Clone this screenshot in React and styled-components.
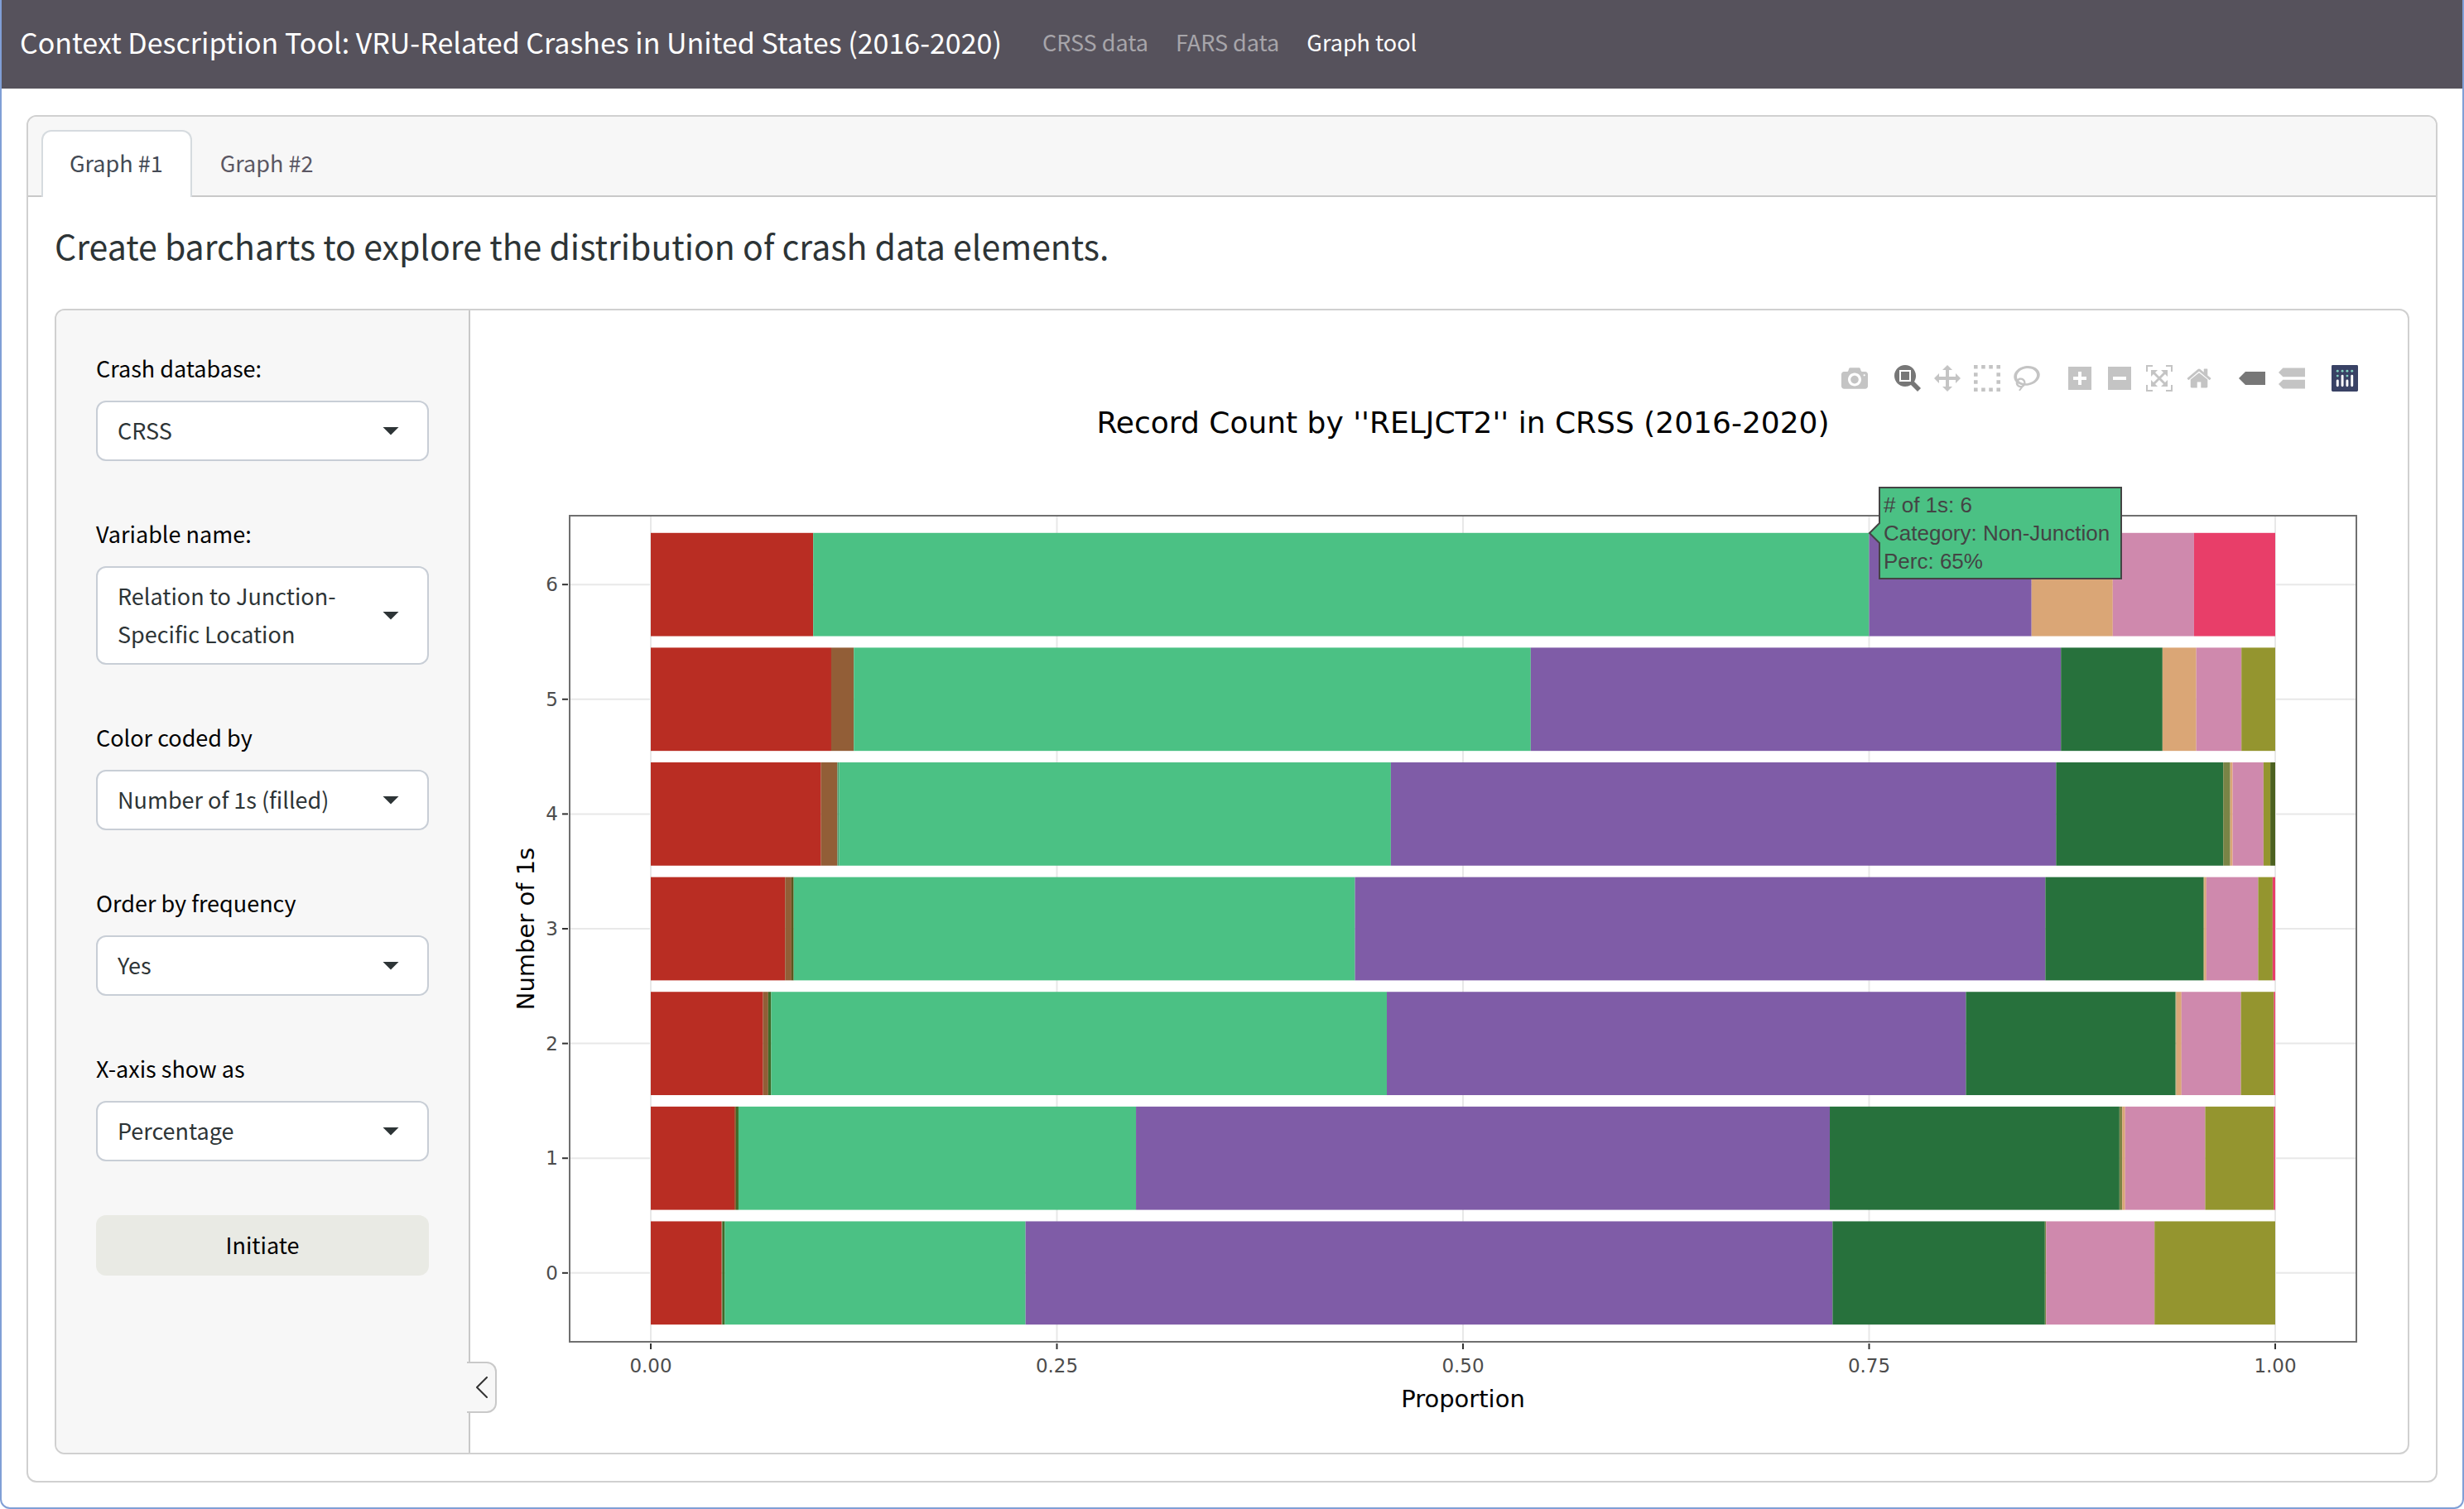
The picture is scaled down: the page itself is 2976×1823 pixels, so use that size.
import React, { useState } from "react";
import styled, { createGlobalStyle } from "styled-components";

const sans = '"Noto Sans CJK SC", "Noto Sans", sans-serif';
const chartSans = '"DejaVu Sans", Verdana, sans-serif';
const line = "#d0d0d0";
const panel = "#f7f7f7";

const GlobalStyle = createGlobalStyle`
  *, *::before, *::after { box-sizing: border-box; }
  body { margin: 0; background: #fff; font-family: ${sans}; }
  button, select { font: inherit; }
`;

const Page = styled.div`
  min-height: 100vh;
  border: 2px solid #809fd6;
  border-top: 0;
  border-radius: 0 0 12px 12px;
  background: #fff;
  color: #2d3436;
  font-size: 27px;
  line-height: 46px;
`;

const Header = styled.header`
  display: flex;
  align-items: center;
  gap: 49px;
  padding: 17px 22px 22px;
  background: #56525c;
`;

const Brand = styled.a`
  color: #fff;
  font-size: 34px;
  line-height: 68px;
  text-decoration: none;
`;

const Nav = styled.nav`
  display: flex;
  gap: 33px;
`;

const NavLink = styled.a`
  color: ${(p) => (p.$active ? "#fff" : "#a7a5aa")};
  text-decoration: none;
`;

const Main = styled.main`
  padding: 32px 30px 30px;
`;

const Card = styled.section`
  border: 2px solid ${line};
  border-radius: 12px;
`;

const TabBar = styled.div`
  display: flex;
  padding: 16px 16px 0;
  background: ${panel};
  border-bottom: 2px solid #c9c9c9;
  border-radius: 10px 10px 0 0;
`;

const Tab = styled.button`
  margin-bottom: -2px;
  padding: 15px 33px 18px 32px;
  line-height: 46px;
  border: 2px solid ${(p) => (p.$active ? "#d6dbdf" : "transparent")};
  border-bottom: 0;
  border-radius: 12px 12px 0 0;
  background: ${(p) => (p.$active ? "#fff" : "transparent")};
  color: ${(p) => (p.$active ? "#434a54" : "#5b5763")};
`;

const CardBody = styled.div`
  padding: 32px;
`;

const Heading = styled.h1`
  margin: 0 0 50px;
  font-size: 41px;
  font-weight: 400;
  line-height: 53px;
`;

const Split = styled.div`
  display: grid;
  grid-template-columns: 500px minmax(0, 1fr);
  border: 2px solid ${line};
  border-radius: 12px;
`;

const Sidebar = styled.form`
  position: relative;
  display: flex;
  flex-direction: column;
  gap: 65px;
  padding: 47px 48px;
  background: ${panel};
  border-right: 2px solid #c9c9c9;
  border-radius: 10px 0 0 10px;
`;

const Field = styled.div`
  display: flex;
  flex-direction: column;
  gap: 16px;
`;

const Label = styled.label`
  color: #000;
`;

const SelectBox = styled.div`
  display: grid;
  align-items: center;

  &::after {
    content: "";
    grid-area: 1 / 1;
    justify-self: end;
    width: 20px;
    height: 10px;
    margin-right: 36px;
    background: #2d3436;
    clip-path: polygon(0 0, 100% 0, 50% 100%);
    pointer-events: none;
  }
`;

const Select = styled.select`
  grid-area: 1 / 1;
  appearance: none;
  width: 100%;
  height: auto;
  padding: 11px 80px 12px 24px;
  border: 2px solid #c8ced6;
  border-radius: 12px;
  background: #fff;
  color: #2d3436;
  line-height: 46px;
  white-space: normal;
`;

const Submit = styled.button`
  padding: 13px 24px 14px;
  border: 0;
  border-radius: 12px;
  background: #e9eae4;
  color: #000;
  line-height: 46px;
`;

const Collapse = styled.button`
  position: absolute;
  left: calc(100% - 2px);
  bottom: 48px;
  display: flex;
  align-items: center;
  width: 36px;
  height: 62px;
  padding: 0 0 0 11px;
  border: 2px solid #c9c9c9;
  border-left: 0;
  border-radius: 0 12px 12px 0;
  background: ${panel};
`;

const Plot = styled.figure`
  margin: 0;
  padding-top: 66px;
  min-width: 0;
`;

const ModeBar = styled.div`
  display: flex;
  justify-content: flex-end;
  gap: 32px;
  padding-right: 60px;
`;

const ModeGroup = styled.div`
  display: flex;
  gap: 16px;
`;

const ModeButton = styled.button`
  display: flex;
  padding: 0;
  border: 0;
  background: none;
  color: ${(p) => (p.$active ? "#777" : "#c4c4c4")};

  svg { width: 32px; height: 32px; }
`;

const Chart = styled.svg`
  display: block;
  width: 100%;
  height: auto;
  font-family: ${chartSans};
`;

const TickText = styled.text`
  font-size: 23px;
  fill: #4d4d4d;
`;

const AxisTitle = styled.text`
  font-size: 29px;
  text-anchor: middle;
`;

const ChartTitle = styled.text`
  font-size: 36px;
  text-anchor: middle;
`;

const HoverText = styled.text`
  font-family: "Liberation Sans", Arial, sans-serif;
  font-size: 26px;
  fill: #444;
`;

const fields = [
  { id: "database", label: "Crash database:", options: ["CRSS", "FARS"] },
  { id: "variable", label: "Variable name:", options: ["Relation to Junction-Specific Location"] },
  { id: "color", label: "Color coded by", options: ["Number of 1s (filled)"] },
  { id: "order", label: "Order by frequency", options: ["Yes", "No"] },
  { id: "xaxis", label: "X-axis show as", options: ["Percentage", "Count"] },
];

const modeGroups = [
  [
    { name: "Download plot as a png", w: 1000, d: "m500 450c-83 0-150-67-150-150 0-83 67-150 150-150 83 0 150 67 150 150 0 83-67 150-150 150z m400 150h-120c-16 0-34 13-39 29l-31 93c-6 15-23 28-40 28h-340c-16 0-34-13-39-28l-31-94c-6-15-23-28-40-28h-120c-55 0-100-45-100-100v-450c0-55 45-100 100-100h800c55 0 100 45 100 100v450c0 55-45 100-100 100z m-400-550c-138 0-250 112-250 250 0 138 112 250 250 250 138 0 250-112 250-250 0-138-112-250-250-250z m365 380c-19 0-35 16-35 35 0 19 16 35 35 35 19 0 35-16 35-35 0-19-16-35-35-35z" },
  ],
  [
    { name: "Zoom", active: true, w: 1000, d: "m1000-25l-250 251c40 63 63 138 63 218 0 224-182 406-407 406-224 0-406-182-406-406s183-406 407-406c80 0 155 22 218 62l250-250 125 125z m-812 250l0 438 437 0 0-438-437 0z m62 375l313 0 0-312-313 0 0 312z" },
    { name: "Pan", w: 1000, d: "m1000 350l-187 188 0-125-250 0 0 250 125 0-188 187-187-187 125 0 0-250-250 0 0 125-188-188 186-187 0 125 252 0 0-250-125 0 187-188 188 188-125 0 0 250 250 0 0-126 187 188z" },
    { name: "Box select", w: 1000, d: "m0 850l0-143 143 0 0 143-143 0z m286 0l0-143 143 0 0 143-143 0z m285 0l0-143 143 0 0 143-143 0z m286 0l0-143 143 0 0 143-143 0z m-857-286l0-143 143 0 0 143-143 0z m857 0l0-143 143 0 0 143-143 0z m-857-285l0-143 143 0 0 143-143 0z m857 0l0-143 143 0 0 143-143 0z m-857-286l0-143 143 0 0 143-143 0z m286 0l0-143 143 0 0 143-143 0z m285 0l0-143 143 0 0 143-143 0z m286 0l0-143 143 0 0 143-143 0z" },
    { name: "Lasso select", w: 1031, d: "m1018 538c-36 207-290 336-568 286-277-48-473-256-436-463 10-57 36-108 76-151-13-66 11-137 68-183 34-28 75-41 114-42l-55-70 0 0c-2-1-3-2-4-3-10-14-8-34 5-45 14-11 34-8 45 4 1 1 2 3 2 5l0 0 113 140c16 11 31 24 45 40 4 3 6 7 8 11 48-3 100 0 151 9 278 48 473 255 436 462z m-624-379c-80 14-149 48-197 96 42 42 109 47 156 9 33-26 47-66 41-105z m-187-74c-19 16-33 37-39 60 50-32 109-55 174-68-42-25-95-24-135 8z m360 75c-34-7-69-9-102-8 8 62-16 128-68 170-73 59-175 54-244-5-9 20-16 40-20 61-28 159 121 317 333 354s407-60 434-217c28-159-121-318-333-355z" },
  ],
  [
    { name: "Zoom in", w: 875, d: "m1 787l0-875 875 0 0 875-875 0z m687-500l-187 0 0-187-125 0 0 187-188 0 0 125 188 0 0 187 125 0 0-187 187 0 0-125z" },
    { name: "Zoom out", w: 875, d: "m0 788l0-876 875 0 0 876-875 0z m688-500l-500 0 0 125 500 0 0-125z" },
    { name: "Autoscale", w: 1000, d: "m250 850l-187 0-63 0 0-62 0-188 63 0 0 188 187 0 0 62z m688 0l-188 0 0-62 188 0 0-188 62 0 0 188 0 62-62 0z m-875-938l0 188-63 0 0-188 0-62 63 0 187 0 0 62-187 0z m875 188l0-188-188 0 0-62 188 0 62 0 0 62 0 188-62 0z m-125 188l-1 0-93-94-156 156 156 156 92-93 2 0 0 250-250 0 0-2 93-92-156-156-156 156 94 92 0 2-250 0 0-250 0 0 93 93 157-156-157-156-93 94 0 0 0-250 250 0 0 0-94 93 156 157 156-157-93-93 0 0 250 0 0 250z" },
    { name: "Reset axes", w: 928, d: "m786 296v-267q0-15-11-26t-25-10h-214v214h-143v-214h-214q-15 0-25 10t-11 26v267q0 1 0 2t0 2l321 264 321-264q1-1 1-4z m124 39l-34-41q-5-5-12-6h-2q-7 0-12 3l-386 322-386-322q-7-4-13-4-7 2-12 7l-35 41q-4 5-3 13t6 12l401 334q18 15 42 15t43-15l136-114v109q0 8 5 13t13 5h107q8 0 13-5t5-13v-227l122-102q5-5 6-12t-4-13z" },
  ],
  [
    { name: "Show closest data on hover", active: true, w: 1500, d: "m375 725l0 0-375-375 375-374 0-1 1125 0 0 750-1125 0z" },
    { name: "Compare data on hover", w: 1125, d: "m187 786l0 2-187-188 188-187 0 0 937 0 0 373-938 0z m0-499l0 1-187-188 188-188 0 0 937 0 0 376-938-1z" },
  ],
];

const red = "#b92d23";
const brown = "#925e37";
const green = "#4bc184";
const purple = "#7f5ca7";
const forest = "#27713c";
const tan = "#daa676";
const pink = "#cf89ad";
const olive = "#94952f";
const crimson = "#e83e69";
const moss = "#7a8446";
const dark = "#3f6a28";

// Each segment is [cumulative end, colour].
const rows = [
  { value: 6, parts: [[0.1, red], [0.75, green], [0.85, purple], [0.9, tan], [0.95, pink], [1, crimson]] },
  { value: 5, parts: [[0.1111, red], [0.125, brown], [0.5417, green], [0.8681, purple], [0.9306, forest], [0.9514, tan], [0.9792, pink], [1, olive]] },
  { value: 4, parts: [[0.1048, red], [0.1149, brown], [0.116, "#4b9c6e"], [0.4556, green], [0.8651, purple], [0.968, forest], [0.9723, moss], [0.9738, tan], [0.9928, pink], [0.997, olive], [1, "#4c611f"]] },
  { value: 3, parts: [[0.0827, red], [0.0866, brown], [0.088, "#5b571c"], [0.4335, green], [0.8585, purple], [0.9558, forest], [0.9563, moss], [0.9576, tan], [0.9895, pink], [0.9984, olive], [1, crimson]] },
  { value: 2, parts: [[0.0691, red], [0.0723, brown], [0.0741, dark], [0.4531, green], [0.8096, purple], [0.9386, forest], [0.9391, moss], [0.9423, tan], [0.9789, pink], [0.9992, olive], [1, crimson]] },
  { value: 1, parts: [[0.0515, red], [0.0525, brown], [0.054, dark], [0.2987, green], [0.7258, purple], [0.9041, forest], [0.9058, moss], [0.9076, tan], [0.9569, pink], [0.9992, olive], [1, crimson]] },
  { value: 0, parts: [[0.0436, red], [0.044, brown], [0.0456, dark], [0.2307, green], [0.7275, purple], [0.8582, forest], [0.859, moss], [0.9257, pink], [1, olive]] },
];

const plot = { left: 120, right: 2278, top: 150, bottom: 1148 };
const xTicks = [0, 0.25, 0.5, 0.75, 1];
const px = (v) => 218 + 1962 * v;
const step = (plot.bottom - plot.top) / 7.2;
const py = (v) => plot.bottom - (v + 0.6) * step;
const barHeight = step * 0.9;

function BarRow({ value, parts }) {
  return parts.map(([end, fill], i) => {
    const start = i ? parts[i - 1][0] : 0;
    return (
      <rect
        key={end}
        x={px(start)}
        y={py(value) - barHeight / 2}
        width={px(end) - px(start)}
        height={barHeight}
        fill={fill}
      />
    );
  });
}

function BarChart() {
  const mid = (plot.left + plot.right) / 2;
  const midY = (plot.top + plot.bottom) / 2;
  return (
    <Chart viewBox="0 0 2340 1282" role="img" aria-label="Record count by RELJCT2 in CRSS">
      <ChartTitle x={mid} y={50}>Record Count by ''RELJCT2'' in CRSS (2016-2020)</ChartTitle>
      <g stroke="#e8e8e8" strokeWidth="2">
        {xTicks.map((t) => <line key={t} x1={px(t)} x2={px(t)} y1={plot.top} y2={plot.bottom} />)}
        {rows.map((r) => <line key={r.value} x1={plot.left} x2={plot.right} y1={py(r.value)} y2={py(r.value)} />)}
      </g>
      {rows.map((r) => <BarRow key={r.value} {...r} />)}
      <rect
        x={plot.left}
        y={plot.top}
        width={plot.right - plot.left}
        height={plot.bottom - plot.top}
        fill="none"
        stroke="#707070"
        strokeWidth="2"
      />
      <g stroke="#333" strokeWidth="2">
        {xTicks.map((t) => <line key={t} x1={px(t)} x2={px(t)} y1={plot.bottom + 2} y2={plot.bottom + 9} />)}
        {rows.map((r) => <line key={r.value} x1={plot.left - 9} x2={plot.left - 2} y1={py(r.value)} y2={py(r.value)} />)}
      </g>
      {xTicks.map((t) => <TickText key={t} x={px(t)} y={1185} textAnchor="middle">{t.toFixed(2)}</TickText>)}
      {rows.map((r) => <TickText key={r.value} x={106} y={py(r.value) + 8} textAnchor="end">{r.value}</TickText>)}
      <AxisTitle x={mid} y={1227}>Proportion</AxisTitle>
      <AxisTitle transform={`translate(77 ${midY}) rotate(-90)`}>Number of 1s</AxisTitle>
      <path d="M1690 171l12-12v-43h292v110h-292v-43z" fill={green} stroke="#444" strokeWidth="2" />
      <HoverText x={1707} y={146}># of 1s: 6</HoverText>
      <HoverText x={1707} y={180}>Category: Non-Junction</HoverText>
      <HoverText x={1707} y={214}>Perc: 65%</HoverText>
    </Chart>
  );
}

function Logo() {
  return (
    <svg viewBox="0 0 132 132" aria-hidden="true">
      <rect width="132" height="132" rx="6" fill="#394265" />
      <g fill="#80cfbe">
        <circle cx="78" cy="54" r="6" />
        <circle cx="102" cy="30" r="6" />
        <circle cx="78" cy="30" r="6" />
        <circle cx="54" cy="30" r="6" />
        <circle cx="30" cy="30" r="6" />
        <circle cx="30" cy="54" r="6" />
      </g>
      <g fill="#fff">
        <rect x="24" y="72" width="12" height="36" rx="6" />
        <rect x="72" y="72" width="12" height="36" rx="6" />
        <rect x="48" y="48" width="12" height="60" rx="6" />
        <rect x="96" y="48" width="12" height="60" rx="6" />
      </g>
    </svg>
  );
}

export default function App() {
  const [tab, setTab] = useState(0);
  return (
    <Page>
      <GlobalStyle />
      <Header>
        <Brand href="#">Context Description Tool: VRU-Related Crashes in United States (2016-2020)</Brand>
        <Nav>
          <NavLink href="#crss">CRSS data</NavLink>
          <NavLink href="#fars">FARS data</NavLink>
          <NavLink href="#graph" $active>Graph tool</NavLink>
        </Nav>
      </Header>
      <Main>
        <Card>
          <TabBar role="tablist">
            {["Graph #1", "Graph #2"].map((name, i) => (
              <Tab key={name} type="button" role="tab" aria-selected={tab === i} $active={tab === i} onClick={() => setTab(i)}>
                {name}
              </Tab>
            ))}
          </TabBar>
          <CardBody>
            <Heading>Create barcharts to explore the distribution of crash data elements.</Heading>
            <Split>
              <Sidebar onSubmit={(e) => e.preventDefault()}>
                {fields.map((f) => (
                  <Field key={f.id}>
                    <Label htmlFor={f.id}>{f.label}</Label>
                    <SelectBox>
                      <Select id={f.id}>
                        {f.options.map((o) => <option key={o}>{o}</option>)}
                      </Select>
                    </SelectBox>
                  </Field>
                ))}
                <Submit type="submit">Initiate</Submit>
                <Collapse type="button" aria-label="Toggle sidebar">
                  <svg width="14" height="26" viewBox="0 0 14 26" fill="none" stroke="#333" strokeWidth="2" strokeLinecap="round" strokeLinejoin="round">
                    <path d="M13 1L1 13l12 12" />
                  </svg>
                </Collapse>
              </Sidebar>
              <Plot>
                <ModeBar>
                  {modeGroups.map((group) => (
                    <ModeGroup key={group[0].name}>
                      {group.map((b) => (
                        <ModeButton key={b.name} type="button" aria-label={b.name} $active={b.active}>
                          <svg viewBox={`0 0 ${b.w} 1000`} aria-hidden="true">
                            <path d={b.d} transform="matrix(1 0 0 -1 0 850)" fill="currentColor" />
                          </svg>
                        </ModeButton>
                      ))}
                    </ModeGroup>
                  ))}
                  <ModeButton type="button" aria-label="Produced with Plotly">
                    <Logo />
                  </ModeButton>
                </ModeBar>
                <BarChart />
              </Plot>
            </Split>
          </CardBody>
        </Card>
      </Main>
    </Page>
  );
}
